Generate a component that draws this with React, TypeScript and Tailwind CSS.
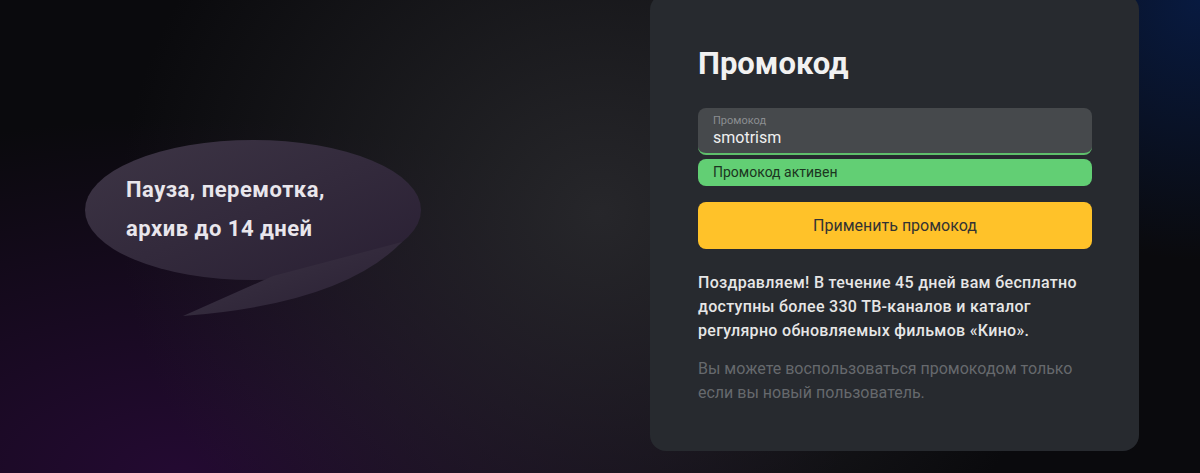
import React from "react";

function SpeechBubble() {
  return (
    <div className="relative w-[350px] h-[185px]">
      <svg
        className="absolute inset-0"
        width="350"
        height="185"
        viewBox="0 0 350 185"
        fill="none"
      >
        <defs>
          <linearGradient id="bubbleFill" x1="0" y1="0" x2="1" y2="1">
            <stop offset="0%" stopColor="#3d3545" />
            <stop offset="100%" stopColor="#291f33" />
          </linearGradient>
        </defs>
        <ellipse cx="173" cy="72" rx="168" ry="70" fill="url(#bubbleFill)" />
        <path d="M193 138 L103 178 Q262 166 322 104 Z" fill="url(#bubbleFill)" />
      </svg>
      <div className="relative pl-[46px] pt-[32px] text-[22px] leading-[39px] font-bold tracking-[0.5px] text-[#e9e6ec]">
        <div>Пауза, перемотка,</div>
        <div>архив до 14 дней</div>
      </div>
    </div>
  );
}

function PromoCard() {
  return (
    <div className="w-[489px] h-[457px] -mt-[6px] shrink-0 rounded-2xl bg-[#272a2f] pl-[48px] pr-[47px] pt-[52px] flex flex-col">
      <h1 className="text-[31px] leading-[36px] font-bold text-[#f1f1f1]">Промокод</h1>

      <div className="mt-[26px] h-[47px] rounded-lg bg-[#46494c] border-b-2 border-[#5fbf6c] pl-[15px] pt-[5px] flex flex-col">
        <span className="text-[11px] leading-[16px] text-[#8b8e91]">Промокод</span>
        <span className="text-[16px] leading-[18px] text-[#f0f0f0]">smotrism</span>
      </div>

      <div className="mt-[4px] h-[27px] rounded-lg bg-[#62cf74] pl-[15px] flex items-center text-[14px] text-[#1b3520]">
        Промокод активен
      </div>

      <button className="mt-[16px] h-[47px] rounded-lg bg-[#ffc229] text-[16px] text-[#333333] flex items-center justify-center">
        Применить промокод
      </button>

      <p className="mt-[22px] text-[16px] leading-[24px] font-medium tracking-[0.3px] text-[#e6e6e6] whitespace-nowrap">
        Поздравляем! В течение 45 дней вам бесплатно
        <br />
        доступны более 330 ТВ-каналов и каталог
        <br />
        регулярно обновляемых фильмов «Кино».
      </p>

      <p className="mt-[14px] text-[16px] leading-[24px] text-[#66696d] whitespace-nowrap">
        Вы можете воспользоваться промокодом только
        <br />
        если вы новый пользователь.
      </p>
    </div>
  );
}

export default function App() {
  return (
    <div
      className="w-[1200px] h-[473px] overflow-hidden flex bg-[#0a0a0d] bg-[radial-gradient(ellipse_40%_95%_at_50%_45%,rgba(40,40,44,0.95),transparent),radial-gradient(ellipse_55%_75%_at_15%_100%,rgba(40,10,56,0.85),transparent),radial-gradient(ellipse_22%_55%_at_100%_0%,rgba(8,26,64,1),transparent)]"
      style={{ fontFamily: "Roboto, 'Noto Sans', sans-serif" }}
    >
      <div className="w-[650px] shrink-0 pl-[80px] pt-[138px]">
        <SpeechBubble />
      </div>
      <PromoCard />
    </div>
  );
}
